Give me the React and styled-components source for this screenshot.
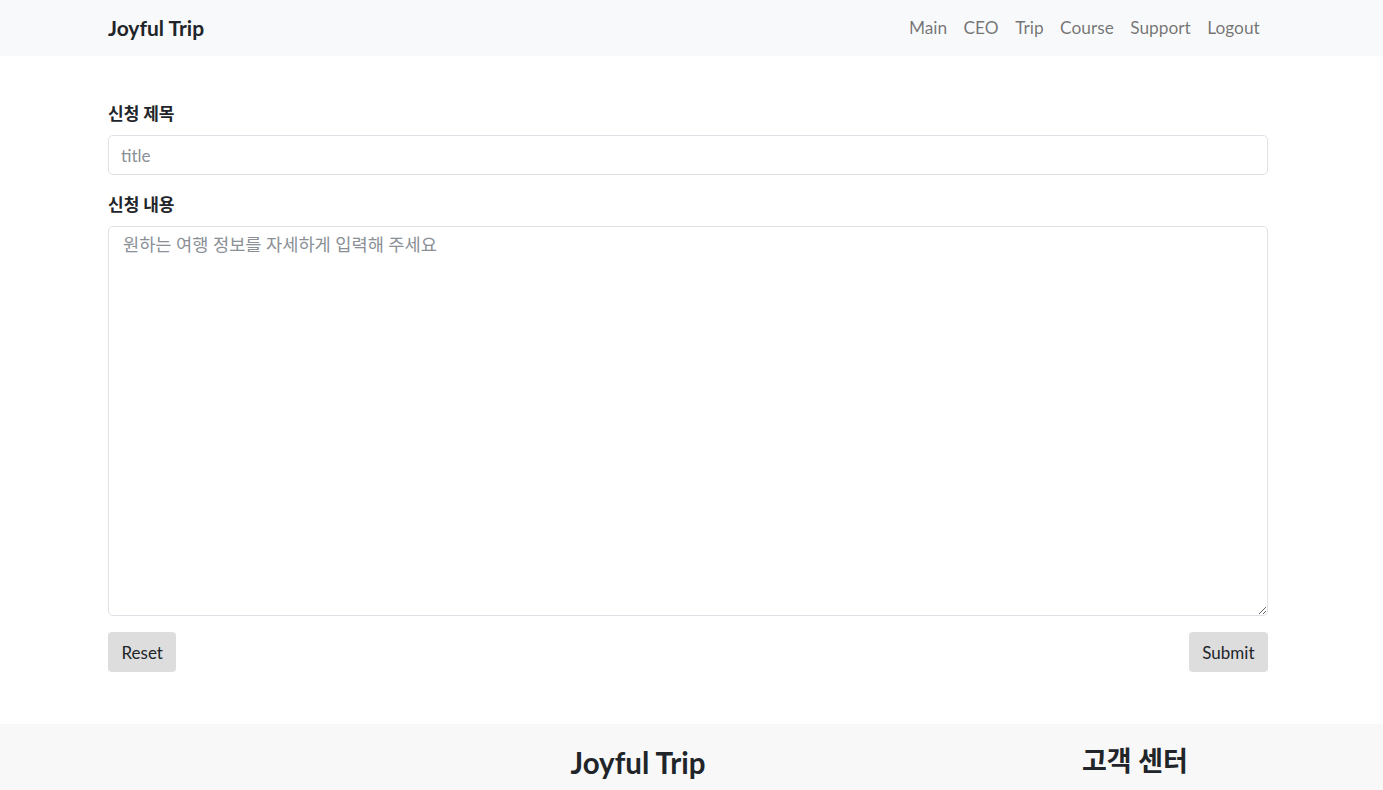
import React from "react";
import styled, { createGlobalStyle } from "styled-components";

const GlobalStyle = createGlobalStyle`
  * { box-sizing: border-box; }
  body {
    margin: 0;
    font-family: Lato, "Noto Sans CJK KR", sans-serif;
    font-size: 16px;
    color: #212529;
    background: #fff;
  }
`;

const NavBar = styled.nav`
  height: 56px;
  background: #f8f9fa;
`;

const NavInner = styled.div`
  width: 1160px;
  margin-left: 108px;
  height: 100%;
  display: flex;
  align-items: center;
  justify-content: space-between;
  padding-bottom: 2px;
`;

const Brand = styled.a`
  font-size: 21px;
  font-weight: 700;
  color: #212529;
  text-decoration: none;
`;

const NavLinks = styled.ul`
  display: flex;
  list-style: none;
  margin: 0;
  padding: 0;
`;

const NavLink = styled.a`
  display: block;
  padding: 8px 8.25px;
  font-size: 17.3px;
  color: rgba(0, 0, 0, 0.55);
  text-decoration: none;
`;

const Main = styled.main`
  width: 1160px;
  margin-left: 108px;
  padding: 44px 0 52px;
`;

const Label = styled.label`
  display: block;
  font-family: "Noto Sans CJK KR", sans-serif;
  font-weight: 700;
  font-size: 17px;
  line-height: 26px;
  margin-bottom: 9px;
`;

const Field = styled.div`
  margin-bottom: 16px;
`;

const Input = styled.input`
  display: block;
  width: 100%;
  height: 40px;
  padding: 6px 12px;
  font-family: Lato, "Noto Sans CJK KR", sans-serif;
  font-size: 17px;
  border: 1px solid #dee2e6;
  border-radius: 5px;
  outline: none;
  &::placeholder { color: #8a9096; }
`;

const TextArea = styled.textarea`
  display: block;
  width: 100%;
  height: 390px;
  padding: 5px 14px;
  font-family: Lato, "Noto Sans CJK KR", sans-serif;
  font-size: 17.6px;
  line-height: 1.5;
  border: 1px solid #dee2e6;
  border-radius: 5px;
  outline: none;
  &::placeholder { color: #8a9096; }
`;

const Buttons = styled.div`
  display: flex;
  justify-content: space-between;
  margin-top: 2px;
`;

const Button = styled.button`
  height: 40px;
  padding: 0 13.5px;
  font-family: Lato, sans-serif;
  font-size: 17px;
  color: #212529;
  background: #dddddd;
  border: none;
  border-radius: 4px;
`;

const Footer = styled.footer`
  background: #f8f8f8;
  height: 66px;
  padding-top: 21px;
  display: grid;
  grid-template-columns: 440px 396px 199px 200px;
`;

const FooterTitle = styled.h2`
  grid-column: ${(p) => p.col};
  margin: 0;
  text-align: center;
  font-size: ${(p) => p.size}px;
  font-weight: 700;
  font-family: Lato, "Noto Sans CJK KR", sans-serif;
  color: #212529;
  line-height: 1.2;
`;

export default function App() {
  return (
    <>
      <GlobalStyle />
      <NavBar>
        <NavInner>
          <Brand href="#">Joyful Trip</Brand>
          <NavLinks>
            {["Main", "CEO", "Trip", "Course", "Support", "Logout"].map((l) => (
              <li key={l}>
                <NavLink href="#">{l}</NavLink>
              </li>
            ))}
          </NavLinks>
        </NavInner>
      </NavBar>
      <Main>
        <Field>
          <Label>신청 제목</Label>
          <Input placeholder="title" />
        </Field>
        <Field>
          <Label>신청 내용</Label>
          <TextArea placeholder="원하는 여행 정보를 자세하게 입력해 주세요" />
        </Field>
        <Buttons>
          <Button type="reset">Reset</Button>
          <Button type="submit">Submit</Button>
        </Buttons>
      </Main>
      <Footer>
        <FooterTitle col={2} size={29.5}>Joyful Trip</FooterTitle>
        <FooterTitle col={4} size={27}>고객 센터</FooterTitle>
      </Footer>
    </>
  );
}
